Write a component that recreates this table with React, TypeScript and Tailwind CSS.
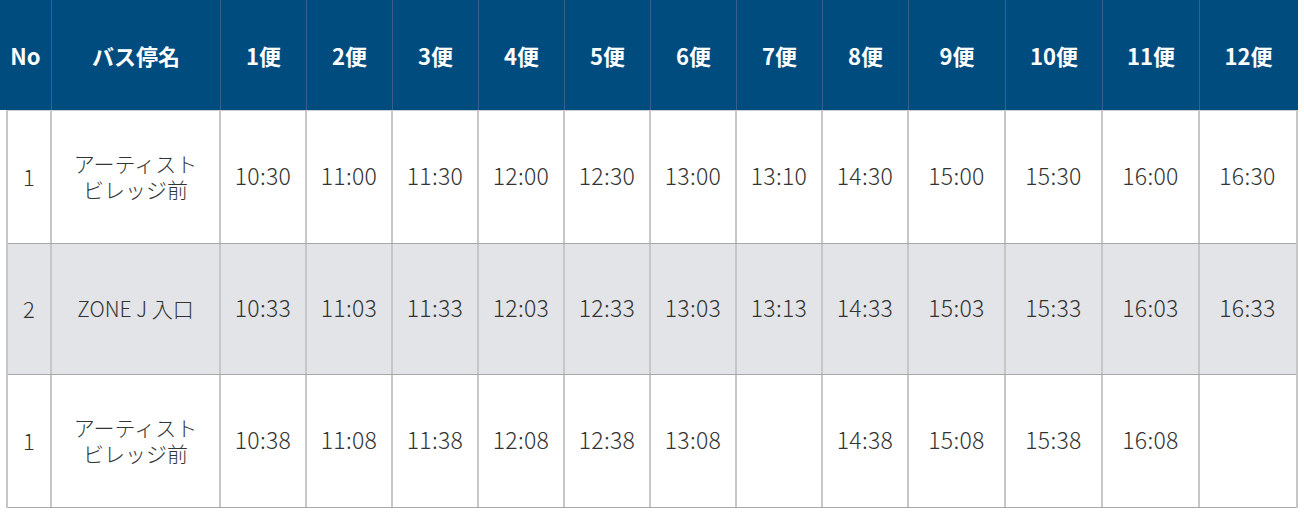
import React from 'react';

// column widths, header and body
const HEAD = [
  { t: 'No', w: 'w-[52px]' },
  { t: 'バス停名', w: 'w-[169px]' },
  { t: '1便', w: 'w-[86px]' },
  { t: '2便', w: 'w-[86px]' },
  { t: '3便', w: 'w-[86px]' },
  { t: '4便', w: 'w-[86px]' },
  { t: '5便', w: 'w-[86px]' },
  { t: '6便', w: 'w-[86px]' },
  { t: '7便', w: 'w-[86px]' },
  { t: '8便', w: 'w-[86px]' },
  { t: '9便', w: 'w-[97px]' },
  { t: '10便', w: 'w-[97px]' },
  { t: '11便', w: 'w-[97px]' },
  { t: '12便', w: 'w-[97px]' },
];

const TIME_W = [
  'w-[86px]', 'w-[86px]', 'w-[86px]', 'w-[86px]', 'w-[86px]', 'w-[86px]', 'w-[86px]', 'w-[86px]',
  'w-[97px]', 'w-[97px]', 'w-[97px]', 'w-[95px]',
];

const ROWS = [
  { no: '1', name: 'アーティスト\nビレッジ前', times: ['10:30', '11:00', '11:30', '12:00', '12:30', '13:00', '13:10', '14:30', '15:00', '15:30', '16:00', '16:30'], cls: 'h-[133px] bg-white' },
  { no: '2', name: 'ZONE J 入口', times: ['10:33', '11:03', '11:33', '12:03', '12:33', '13:03', '13:13', '14:33', '15:03', '15:33', '16:03', '16:33'], cls: 'h-[131px] bg-[#e3e4e8]' },
  { no: '1', name: 'アーティスト\nビレッジ前', times: ['10:38', '11:08', '11:38', '12:08', '12:38', '13:08', '', '14:38', '15:08', '15:38', '16:08', ''], cls: 'h-[133px] bg-white' },
];

export default function App() {
  return (
    <div className="w-[1304px] h-[513px] bg-white overflow-hidden font-['Noto_Sans_CJK_JP','Noto_Sans',sans-serif] text-[#333]">
      {/* header */}
      <div className="flex h-[110px] w-[1298px] bg-[#004c7f]">
        {HEAD.map((h, i) => (
          <div
            key={i}
            className={`${h.w} flex items-center justify-center text-white font-bold text-[22px] ${i < HEAD.length - 1 ? 'border-r border-[#35618a]' : ''}`}
          >
            {h.t}
          </div>
        ))}
      </div>

      {/* body */}
      <div className="ml-[6px] w-[1292px] border-l-2 border-r-2 border-[#c6c6c6] border-t border-t-[#c9ced6] font-light">
        {ROWS.map((r, ri) => (
          <div key={ri} className={`flex border-b border-[#a8a8a8] ${r.cls}`}>
            <div className="w-[44px] flex items-center justify-center text-[22px] pb-[2px] border-r-2 border-[#c6c6c6]">
              {r.no}
            </div>
            <div className="w-[169px] flex items-center justify-center text-center whitespace-pre-line text-[21px] leading-[26px] pb-[2px] border-r-2 border-[#c6c6c6]">
              {r.name}
            </div>
            {r.times.map((t, ti) => (
              <div
                key={ti}
                className={`${TIME_W[ti]} flex items-center justify-center text-[23px] tracking-[0.3px] pb-[3px] ${ti < 11 ? 'border-r-2 border-[#c6c6c6]' : ''}`}
              >
                {t}
              </div>
            ))}
          </div>
        ))}
      </div>
    </div>
  );
}
